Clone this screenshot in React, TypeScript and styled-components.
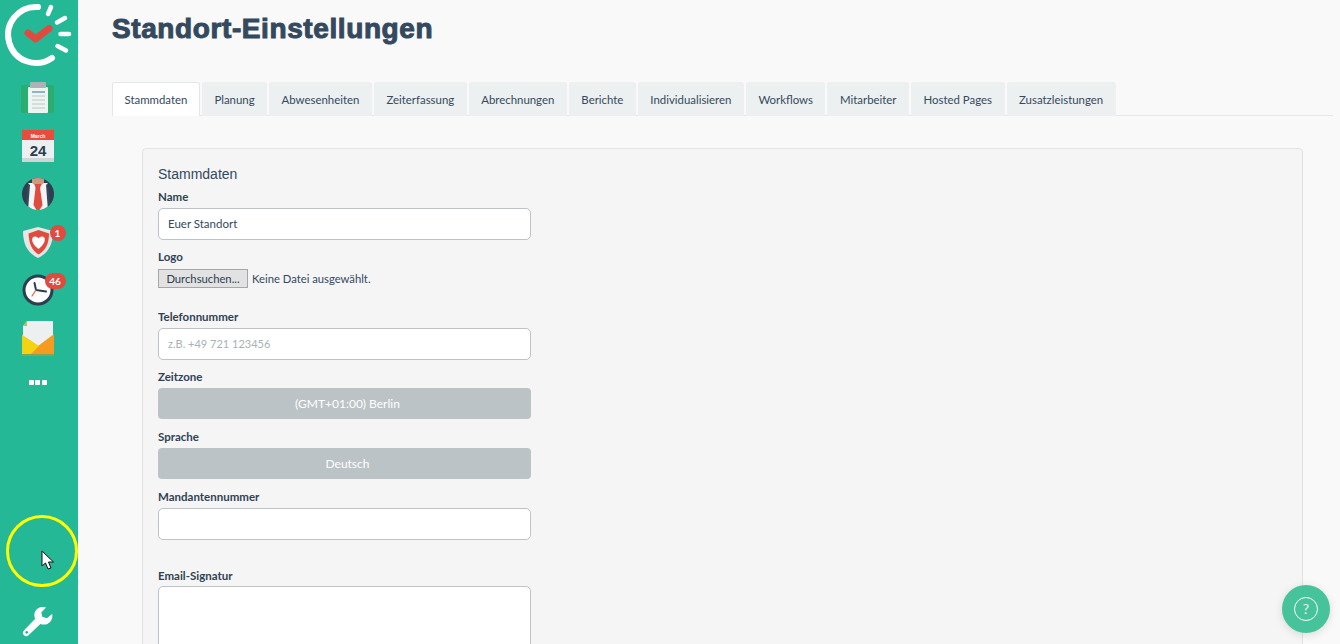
import React from "react";
import styled, { createGlobalStyle } from "styled-components";

const Global = createGlobalStyle`
  html, body { margin: 0; padding: 0; height: 100%; overflow: hidden; background: #f9f9f9; }
  * { box-sizing: border-box; }
`;

const Shell = styled.div`
  position: relative;
  display: flex;
  width: 1340px;
  height: 644px;
  overflow: hidden;
  font-family: Lato, "Liberation Sans", sans-serif;
  color: #2c3e50;
`;

const Sidebar = styled.nav`
  flex: 0 0 78px;
  min-width: 0;
  display: flex;
  flex-direction: column;
  align-items: center;
  padding-right: 3px;
  background: #25b897;
`;

const LogoSlot = styled.div`
  flex: 0 0 74px;
  width: 75px;
  align-self: flex-start;
  display: flex;
`;

const NavItem = styled.div<{ $h?: number }>`
  position: relative;
  flex: 0 0 ${(p) => p.$h ?? 48}px;
  width: 36px;
  display: flex;
  align-items: center;
  justify-content: center;
`;

const Badge = styled.span<{ $wide?: boolean }>`
  position: absolute;
  top: 7px;
  left: ${(p) => (p.$wide ? 25 : 30)}px;
  min-width: ${(p) => (p.$wide ? 21 : 16)}px;
  height: 16px;
  border-radius: 8px;
  background: #e04b3f;
  color: #fff;
  font-size: 10px;
  font-weight: 700;
  line-height: 16px;
  text-align: center;
`;

const Dots = styled.div`
  display: flex;
  gap: 1.5px;
`;

const Dot = styled.i`
  width: 5px;
  height: 5px;
  border-radius: 1px;
  background: #fff;
`;

const WrenchSlot = styled.div`
  margin-top: auto;
  flex: 0 0 44px;
  display: flex;
  align-items: center;
  justify-content: center;
`;

const Main = styled.main`
  flex: 1;
  min-width: 0;
  padding: 0 7px 0 34px;
  background: #f9f9f9;
`;

const Title = styled.h1`
  margin: 0;
  padding-top: 13px;
  height: 82px;
  font-family: "Liberation Sans", Arial, sans-serif;
  font-size: 28px;
  line-height: 32px;
  font-weight: 700;
  color: #34495e;
  -webkit-text-stroke: 1px #34495e;
  letter-spacing: 0.6px;
`;

const TabBar = styled.div`
  display: flex;
  gap: 2px;
  height: 34px;
  border-bottom: 1px solid #e4e7e8;
`;

const Tab = styled.div<{ $active?: boolean }>`
  height: 34px;
  padding: 0 11.5px;
  font-size: 11.42px;
  line-height: 33px;
  white-space: nowrap;
  color: #34495e;
  border-radius: 3px 3px 0 0;
  background: ${(p) => (p.$active ? "#fff" : "#ecf0f1")};
  border: 1px solid ${(p) => (p.$active ? "#e4e7e8" : "#ecf0f1")};
  border-bottom: 0;
`;

const Panel = styled.section`
  margin: 32px 30px 0;
  height: 600px;
  padding: 15px;
  background: #f5f5f5;
  border: 1px solid #e3e3e3;
  border-radius: 4px;
`;

const PanelTitle = styled.h2`
  margin: 0;
  height: 24px;
  font-family: "Liberation Sans", Arial, sans-serif;
  font-size: 14px;
  line-height: 20px;
  font-weight: 400;
  color: #34495e;
`;

const Group = styled.div<{ $extra?: number }>`
  width: 373px;
  margin-top: ${(p) => p.$extra ?? 0}px;
  height: 60px;
`;

const Label = styled.label`
  display: block;
  height: 20px;
  font-size: 11.5px;
  line-height: 18px;
  font-weight: 700;
  color: #2f4254;
`;

const TextInput = styled.input`
  display: block;
  width: 373px;
  height: 32px;
  padding: 0 9px 1px;
  font-family: inherit;
  font-size: 11.5px;
  color: #34495e;
  background: #fff;
  border: 1px solid #bdc3c7;
  border-radius: 5px;
  outline: none;
  &::placeholder { color: #a9b1b5; opacity: 1; font-size: 11px; }
`;

const FileRow = styled.div`
  display: flex;
  align-items: center;
  gap: 4px;
  height: 20px;
  font-size: 11.25px;
  color: #34495e;
`;

const FileButton = styled.button`
  width: 90px;
  height: 19px;
  padding: 0;
  font-family: inherit;
  font-size: 11.25px;
  color: #2c3e50;
  background: #e2e2e2;
  border: 1px solid #a6a6a6;
`;

const SelectBox = styled.div`
  width: 373px;
  height: 31px;
  padding: 0 0 0 6px;
  font-size: 12px;
  line-height: 31px;
  text-align: center;
  color: #fff;
  background: #bcc3c6;
  border-radius: 4px;
`;

const Area = styled.textarea`
  display: block;
  width: 373px;
  height: 120px;
  margin-top: -1px;
  background: #fff;
  border: 1px solid #bdc3c7;
  border-radius: 5px;
  resize: none;
  outline: none;
`;

const Highlight = styled.div`
  position: absolute;
  left: 6px;
  top: 515px;
  width: 72px;
  height: 72px;
  border: 3px solid #ffff00;
  border-radius: 50%;
  pointer-events: none;
`;

const Pointer = styled.svg`
  position: absolute;
  left: 41px;
  top: 550px;
`;

const Help = styled.div`
  position: absolute;
  left: 1282px;
  top: 585px;
  width: 48px;
  height: 48px;
  display: flex;
  align-items: center;
  justify-content: center;
  border-radius: 50%;
  background: #47c39b;
  box-shadow: 0 2px 8px rgba(0, 0, 0, 0.12);
`;

const HelpRing = styled.div`
  width: 24px;
  height: 24px;
  border: 1.5px solid #fff;
  border-radius: 50%;
  color: #e8f7f2;
  font-size: 14px;
  line-height: 21px;
  text-align: center;
`;

const Logo = () => (
  <svg width="75" height="74" viewBox="0 0 75 74" fill="none" strokeLinecap="round">
    <path d="M38 7 A28 28 0 1 0 52 58" stroke="#fff" strokeWidth="6" />
    <path d="M51 7L48 14M65 18L57 22.500M69 34H60.500M66 50.500L57.500 46" stroke="#fff" strokeWidth="4.500" />
    <path d="M28 33L35.500 39L49 28.500" stroke="#e04b3f" strokeWidth="7" strokeLinejoin="round" />
  </svg>
);

const Clipboard = () => (
  <svg width="34" height="32" viewBox="0 0 34 32">
    <rect x="0" y="3" width="33" height="28" rx="2" fill="#2aae70" />
    <rect x="7" y="5" width="20" height="26" rx="1" fill="#ecf5f1" />
    <rect x="9" y="0" width="16" height="6" rx="1" fill="#a9b4b7" />
    <path d="M11 10h13" stroke="#6f9fb0" strokeWidth="1.500" />
    <path d="M11 14h13M11 18h13M11 22h13M11 26h13" stroke="#b8c8c4" strokeWidth="1" />
  </svg>
);

const CalendarIcon = () => (
  <svg width="34" height="33" viewBox="0 0 34 33">
    <rect x="1" y="0" width="32" height="32" rx="1" fill="#ecf0f1" />
    <rect x="1" y="28" width="32" height="4" fill="#cfd6d8" />
    <rect x="1" y="0" width="32" height="10" fill="#e74c3c" />
    <text x="17" y="7.500" fontFamily="Liberation Sans" fontSize="5" fontWeight="700" textAnchor="middle" fill="#fff">March</text>
    <text x="17" y="26" fontFamily="Liberation Sans" fontSize="15" fontWeight="700" textAnchor="middle" fill="#2c3e50">24</text>
  </svg>
);

const Person = () => (
  <svg width="34" height="34" viewBox="0 0 34 34">
    <defs>
      <clipPath id="pc"><circle cx="17" cy="17" r="16" /></clipPath>
    </defs>
    <g clipPath="url(#pc)">
      <rect width="34" height="34" fill="#2c3e50" />
      <rect x="7" y="6" width="20" height="28" fill="#f3f5f5" />
      <path d="M7 6L4 34h3L9 8zM27 6l3 28h-3L25 8z" fill="#34495e" />
      <path d="M11 0h12v6q-6 5-12 0z" fill="#c99a80" />
      <path d="M13.500 7h7l-1.500 4 2.500 17-3.500 6h-2L12.500 28l2-17z" fill="#e04b3f" />
    </g>
  </svg>
);

const Shield = () => (
  <svg width="32" height="33" viewBox="0 0 32 33">
    <path d="M16 1L31 5C31 19 26 27 16 32C6 27 1 19 1 5Z" fill="#e6e6e4" />
    <path d="M16.500 4L27 7.500C27 17 24 24 16.500 28.500C9.500 24 7 17 6.500 7.500Z" fill="#e04b3f" />
    <path d="M16.500 23C8.500 17 9 10.500 13 10.500C15 10.500 16 11.500 16.500 12.500C17 11.500 18 10.500 20 10.500C24 10.500 24.500 17 16.500 23Z" fill="#fff" />
  </svg>
);

const ClockIcon = () => (
  <svg width="32" height="32" viewBox="0 0 32 32">
    <circle cx="16" cy="16" r="14" fill="#fff" stroke="#2c3e50" strokeWidth="3" />
    <path d="M14 16L12.500 9M14 16L24 17.500" stroke="#2c3e50" strokeWidth="2" strokeLinecap="round" />
    <path d="M14 16L10 22" stroke="#e0603f" strokeWidth="1.200" strokeLinecap="round" />
  </svg>
);

const Envelope = () => (
  <svg width="34" height="35" viewBox="0 0 34 35">
    <path d="M6 0H32V26H2V5Z" fill="#ecf0f1" />
    <path d="M2 5L6 0V5Z" fill="#9ecb5a" />
    <path d="M1 14L17 25L33 13V34H1Z" fill="#f39c1f" />
    <path d="M1 14L18 25L9 34H1Z" fill="#f4d313" />
    <path d="M1 33H33V35H1Z" fill="#86a35a" />
  </svg>
);

const Wrench = () => (
  <svg width="32" height="32" viewBox="0 0 34 34">
    <path
      d="M32 8.500L26.500 13L21.500 11.500L20.500 7L25.500 1.500C20.500 0 15 2 13.500 7C12.800 9.500 13 11.500 14 13.500L2.500 25.500C0.500 27.500 0.500 29.500 2 31C3.500 32.500 5.500 32.500 7.500 30.500L19.500 19C22 20 24.500 20 27 19C31 17 33 13 32 8.500Z"
      fill="#fff"
    />
    <circle cx="5" cy="28" r="1.400" fill="#25b897" />
  </svg>
);

const tabs = [
  "Stammdaten",
  "Planung",
  "Abwesenheiten",
  "Zeiterfassung",
  "Abrechnungen",
  "Berichte",
  "Individualisieren",
  "Workflows",
  "Mitarbeiter",
  "Hosted Pages",
  "Zusatzleistungen",
];

export default function App() {
  return (
    <Shell>
      <Global />
      <Sidebar>
        <LogoSlot><Logo /></LogoSlot>
        <NavItem><Clipboard /></NavItem>
        <NavItem><CalendarIcon /></NavItem>
        <NavItem><Person /></NavItem>
        <NavItem><Shield /><Badge>1</Badge></NavItem>
        <NavItem><ClockIcon /><Badge $wide>46</Badge></NavItem>
        <NavItem><Envelope /></NavItem>
        <NavItem $h={40}><Dots><Dot /><Dot /><Dot /></Dots></NavItem>
        <WrenchSlot><Wrench /></WrenchSlot>
      </Sidebar>
      <Main>
        <Title>Standort-Einstellungen</Title>
        <TabBar>
          {tabs.map((t, i) => (
            <Tab key={t} $active={i === 0}>{t}</Tab>
          ))}
        </TabBar>
        <Panel>
          <PanelTitle>Stammdaten</PanelTitle>
          <Group>
            <Label>Name</Label>
            <TextInput readOnly value="Euer Standort" />
          </Group>
          <Group>
            <Label>Logo</Label>
            <FileRow>
              <FileButton type="button">Durchsuchen...</FileButton>
              Keine Datei ausgewählt.
            </FileRow>
          </Group>
          <Group>
            <Label>Telefonnummer</Label>
            <TextInput readOnly placeholder="z.B. +49 721 123456" />
          </Group>
          <Group>
            <Label>Zeitzone</Label>
            <SelectBox>(GMT+01:00) Berlin</SelectBox>
          </Group>
          <Group>
            <Label>Sprache</Label>
            <SelectBox>Deutsch</SelectBox>
          </Group>
          <Group>
            <Label>Mandantennummer</Label>
            <TextInput readOnly />
          </Group>
          <Group $extra={19}>
            <Label>Email-Signatur</Label>
            <Area readOnly />
          </Group>
        </Panel>
      </Main>
      <Highlight />
      <Pointer width="14" height="20" viewBox="0 0 14 20">
        <path d="M1 1V16L4.500 13L7 19L10 18L7.500 12H12.500Z" fill="#fff" stroke="#111" strokeWidth="1" strokeLinejoin="round" />
      </Pointer>
      <Help><HelpRing>?</HelpRing></Help>
    </Shell>
  );
}
